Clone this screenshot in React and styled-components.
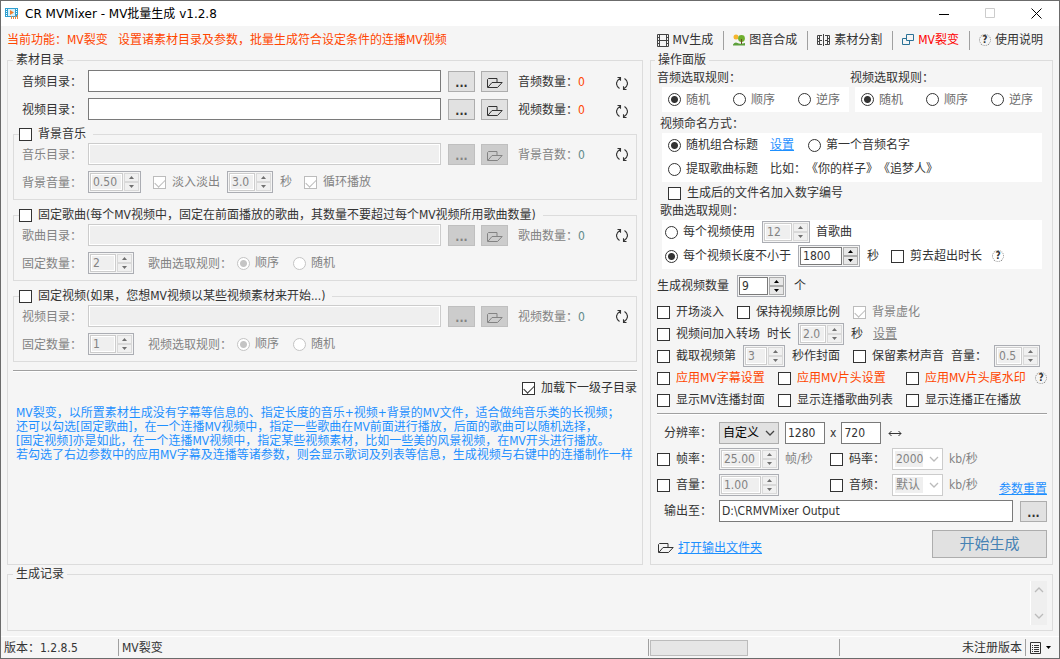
import { useId, useState } from 'react'
import styled, { createGlobalStyle, css } from 'styled-components'

const help = [
  'MV裂变，以所置素材生成没有字幕等信息的、指定长度的音乐+视频+背景的MV文件，适合做纯音乐类的长视频；',
  '还可以勾选[固定歌曲]，在一个连播MV视频中，指定一些歌曲在MV前面进行播放，后面的歌曲可以随机选择，',
  '[固定视频]亦是如此，在一个连播MV视频中，指定某些视频素材，比如一些美的风景视频，在MV开头进行播放。',
  '若勾选了右边参数中的应用MV字幕及连播等诸参数，则会显示歌词及列表等信息，生成视频与右键中的连播制作一样',
]

/* ---------- icons ---------- */

const AppIcon = () => (
  <svg width="14" height="13" viewBox="0 0 14 13">
    <rect x="0" y="1" width="13" height="9" fill="#2f9fd0" />
    <rect x="3" y="2" width="7" height="7" fill="#d9f1fa" />
    <path d="M1 2h1v1H1zM1 4h1v1H1zM1 6h1v1H1zM1 8h1v1H1zM11 2h1v1h-1zM11 4h1v1h-1zM11 6h1v1h-1z" fill="#fff" />
    <path d="M5 3l4 2.5L5 8z" fill="#f08030" />
    <path d="M6.5 12V9M8.5 12V9.5M10.5 12V9M12.5 12V8" stroke="#e58a4a" />
  </svg>
)

const FilmIcon = () => (
  <svg width="12" height="13" viewBox="0 0 12 13" fill="none" stroke="#444">
    <path d="M.5.5h11v12H.5zM2.5.5v12M9.5.5v12M2.5 6.5h7M.5 3.5h2M.5 6.5h2M.5 9.5h2M9.5 3.5h2M9.5 6.5h2M9.5 9.5h2" />
  </svg>
)

const TreeIcon = () => (
  <svg width="12" height="12" viewBox="0 0 12 12">
    <circle cx="3" cy="3" r="2.5" fill="#f5b52e" />
    <path d="M0 10.5Q2 7.5 4.5 9T12 9v2.5H0z" fill="#5da03c" />
    <circle cx="8.5" cy="4.5" r="3.4" fill="#6faf2d" />
    <path d="M8.5 5v5" stroke="#6b4a23" />
  </svg>
)

const SplitIcon = () => (
  <svg width="13" height="12" viewBox="0 0 13 12" fill="none" stroke="#444">
    <path d="M5 1.5H.5v9H5M2.5 1.5v9M.5 4.5h2M.5 7.5h2M2.5 6.5H5M8 1.5h4.5v9H8M10.5 1.5v9M10.5 4.5h2M10.5 7.5h2M8 6.5h2.5" />
    <path d="M6.5 0v12" />
  </svg>
)

const CloneIcon = () => (
  <svg width="12" height="12" viewBox="0 0 12 12" fill="none" stroke="#2b7296">
    <path d="M4.500.5h7v6h-7zM4.500 4.500h-4v6h7v-4" />
  </svg>
)

const FolderIcon = () => (
  <svg width="16" height="10" viewBox="0 0 16 10" fill="none" stroke="currentColor">
    <path d="M.5 9.500v-8l1-1h8.500v4M.8 9.500l4.200-5h10.200l-4.700 5z" />
  </svg>
)

const RefreshIcon = () => (
  <svg width="12" height="13" viewBox="0 0 12 13" fill="none" stroke="#333" strokeWidth="1.1">
    <path d="M3.500 11.500Q.5 9.500.5 6.500T4.200 1.200M1.500.5h3v3.200M8.500 1.500q3 2 3 5T7.800 11.800M10.500 12.500h-3V9.300" />
  </svg>
)

const SwapIcon = () => (
  <svg width="14" height="7" viewBox="0 0 14 7" fill="none" stroke="#333">
    <path d="M1 3.500h12M3.500 1L1 3.500 3.500 6M10.500 1L13 3.500 10.500 6" />
  </svg>
)

const Chevron = ({ up }) => (
  <svg width="10" height="6" viewBox="0 0 10 6" fill="none" stroke="currentColor" strokeWidth="1.3">
    <path d={up ? 'M1 5l4-4 4 4' : 'M1 1l4 4 4-4'} />
  </svg>
)

const Triangle = ({ up }) => (
  <svg width="5" height="3" viewBox="0 0 5 3" fill="currentColor">
    <path d={up ? 'M0 3h5L2.500 0z' : 'M0 0h5L2.500 3z'} />
  </svg>
)

const ListIcon = () => (
  <svg width="12" height="12" viewBox="0 0 12 12" fill="none" stroke="#333">
    <path d="M.5.5h10v11H.5zM2 3.500h1M4 3.500h5M2 5.500h1M4 5.500h5M2 7.500h1M4 7.500h5M2 9.500h1M4 9.500h5" />
  </svg>
)

/* ---------- controls ---------- */

const Check = ({ children, tone, ...rest }) => (
  <Choice $tone={rest.disabled ? 'muted' : tone}>
    <Tick type="checkbox" {...rest} />
    {children}
  </Choice>
)

const Radio = ({ children, tone, ...rest }) => (
  <Choice $gap={5} $tone={rest.disabled ? 'muted' : tone}>
    <Dot type="radio" {...rest} />
    {children}
  </Choice>
)

const Spinner = ({ value, step = 1, digits = 0, width = 46, label, disabled, id }) => {
  const [val, setVal] = useState(value)
  const move = (by) => setVal((prev) => (Number(prev) + by).toFixed(digits))

  return (
    <SpinBox $width={width}>
      <input id={id} aria-label={label} value={val} disabled={disabled} onChange={(e) => setVal(e.target.value)} />
      <span>
        <button type="button" aria-label="+" disabled={disabled} onClick={() => move(step)}><Triangle up /></button>
        <button type="button" aria-label="-" disabled={disabled} onClick={() => move(-step)}><Triangle /></button>
      </span>
    </SpinBox>
  )
}

const Select = ({ options, width, label, disabled }) => (
  <SelectBox $width={width} $off={disabled}>
    <select aria-label={label} disabled={disabled}>
      {options.map((o) => <option key={o}>{o}</option>)}
    </select>
    <Chevron />
  </SelectBox>
)

const FolderRow = ({ name, count, disabled }) => {
  const id = useId()
  return (
    <Row>
      <Caption as="label" htmlFor={id} $muted={disabled}>{name}：</Caption>
      <TextBox id={id} disabled={disabled} />
      <PickButtons>
        <SmallButton type="button" disabled={disabled}>...</SmallButton>
        <SmallButton type="button" aria-label="open" disabled={disabled}><FolderIcon /></SmallButton>
      </PickButtons>
      <Count $muted={disabled}>{count}：<b>0</b></Count>
      <IconButton type="button" aria-label="refresh" $low={!disabled}><RefreshIcon /></IconButton>
    </Row>
  )
}

const OrderRadios = ({ name }) => (
  <WhiteBox $columns>
    <Radio name={name} tone="soft" defaultChecked>随机</Radio>
    <Radio name={name} tone="soft">顺序</Radio>
    <Radio name={name} tone="soft">逆序</Radio>
  </WhiteBox>
)

/* ---------- panels ---------- */

const SourcePanel = () => (
  <Group>
    <legend>素材目录</legend>
    <TopRows>
      <FolderRow name="音频目录" count="音频数量" />
      <FolderRow name="视频目录" count="视频数量" />
    </TopRows>

    <SubGroup>
      <legend><Check>背景音乐</Check></legend>
      <FolderRow name="音乐目录" count="背景音数" disabled />
      <Row>
        <Caption $muted>背景音量：</Caption>
        <Spinner value="0.50" step={0.05} digits={2} width={53} label="背景音量" disabled />
        <Spaced $left={12}><Check disabled defaultChecked>淡入淡出</Check></Spaced>
        <Spaced $left={7}><Spinner value="3.0" step={0.1} digits={1} label="淡入淡出秒数" disabled /></Spaced>
        <Spaced $left={7} $muted>秒</Spaced>
        <Spaced $left={12}><Check disabled defaultChecked>循环播放</Check></Spaced>
      </Row>
    </SubGroup>

    <SubGroup>
      <legend><Check>固定歌曲(每个MV视频中，固定在前面播放的歌曲，其数量不要超过每个MV视频所用歌曲数量)</Check></legend>
      <FolderRow name="歌曲目录" count="歌曲数量" disabled />
      <Row>
        <Caption $muted>固定数量：</Caption>
        <Spinner value="2" label="固定歌曲数量" disabled />
        <RuleCaption>歌曲选取规则：</RuleCaption>
        <Radio name="songFix" disabled defaultChecked>顺序</Radio>
        <Spaced $left={14}><Radio name="songFix" disabled>随机</Radio></Spaced>
      </Row>
    </SubGroup>

    <SubGroup>
      <legend><Check>固定视频(如果，您想MV视频以某些视频素材来开始...)</Check></legend>
      <FolderRow name="视频目录" count="视频数量" disabled />
      <Row>
        <Caption $muted>固定数量：</Caption>
        <Spinner value="1" label="固定视频数量" disabled />
        <RuleCaption>视频选取规则：</RuleCaption>
        <Radio name="videoFix" disabled defaultChecked>顺序</Radio>
        <Spaced $left={14}><Radio name="videoFix" disabled>随机</Radio></Spaced>
      </Row>
    </SubGroup>

    <Divider />
    <SubFolders><Check defaultChecked>加载下一级子目录</Check></SubFolders>
    <Help>
      {help.map((line) => <p key={line}>{line}</p>)}
    </Help>
  </Group>
)

const OptionPanel = () => (
  <Group $side>
    <legend>操作面版</legend>

    <Columns>
      <div>
        <Title $out>音频选取规则：</Title>
        <OrderRadios name="audioRule" />
      </div>
      <div>
        <Title $out>视频选取规则：</Title>
        <OrderRadios name="videoRule" />
      </div>
    </Columns>

    <Title>视频命名方式：</Title>
    <WhiteBox>
      <BoxRow>
        <Radio name="naming" defaultChecked>随机组合标题</Radio>
        <Spaced $left={12}><Link href="#naming">设置</Link></Spaced>
        <Spaced $left={14}><Radio name="naming">第一个音频名字</Radio></Spaced>
      </BoxRow>
      <BoxRow>
        <Radio name="naming">提取歌曲标题</Radio>
        <Spaced $left={12}>比如：《你的样子》《追梦人》</Spaced>
      </BoxRow>
    </WhiteBox>
    <Numbering><Check>生成后的文件名加入数字编号</Check></Numbering>

    <Title>歌曲选取规则：</Title>
    <WhiteBox $tight>
      <BoxRow>
        <Radio name="length">每个视频使用</Radio>
        <Spaced $left={7}><Spinner value="12" width={48} label="歌曲数" disabled /></Spaced>
        <Spaced $left={6}>首歌曲</Spaced>
      </BoxRow>
      <BoxRow>
        <Radio name="length" defaultChecked>每个视频长度不小于</Radio>
        <Spaced $left={7}><Spinner value="1800" width={62} label="视频长度" /></Spaced>
        <Spaced $left={7}>秒</Spaced>
        <Spaced $left={12}><Check>剪去超出时长</Check></Spaced>
        <Spaced $left={10}><HelpMark>?</HelpMark></Spaced>
      </BoxRow>
    </WhiteBox>

    <CountRow>
      <label htmlFor="videoCount">生成视频数量</label>
      <Spinner id="videoCount" value="9" width={49} />
      个
    </CountRow>

    <Options>
      <OptionGrid $columns="80px 116px 1fr">
        <Check>开场淡入</Check>
        <Check>保持视频原比例</Check>
        <Check disabled defaultChecked>背景虚化</Check>
      </OptionGrid>
      <OptionRow>
        <Check>视频间加入转场</Check>
        时长
        <Spinner value="2.0" step={0.1} digits={1} label="转场时长" disabled />
        秒
        <Spaced $left={3}><Link href="#transition" $muted>设置</Link></Spaced>
      </OptionRow>
      <OptionRow>
        <Check>截取视频第</Check>
        <Spinner value="3" width={42} label="封面秒数" disabled />
        秒作封面
        <Spaced $left={6}><Check>保留素材声音</Check></Spaced>
        音量：
        <Spinner value="0.5" step={0.1} digits={1} label="素材音量" disabled />
      </OptionRow>
      <OptionGrid $columns="121px 128px 1fr auto">
        <Check tone="hot">应用MV字幕设置</Check>
        <Check tone="hot">应用MV片头设置</Check>
        <Check tone="hot">应用MV片头尾水印</Check>
        <HelpMark>?</HelpMark>
      </OptionGrid>
      <OptionGrid $columns="121px 128px 1fr">
        <Check>显示MV连播封面</Check>
        <Check>显示连播歌曲列表</Check>
        <Check>显示连播正在播放</Check>
      </OptionGrid>
    </Options>

    <Divider />

    <Output>
      <Row>
        <OutCaption $plain>分辨率：</OutCaption>
        <Select options={['自定义', '1280x720', '1920x1080']} width={60} label="分辨率" />
        <Spaced $left={6}><TextBox $width={40} aria-label="宽" defaultValue="1280" /></Spaced>
        <Spaced $left={5}>x</Spaced>
        <Spaced $left={5}><TextBox $width={40} aria-label="高" defaultValue="720" /></Spaced>
        <Spaced $left={7}><SwapIcon /></Spaced>
      </Row>
      <Row>
        <OutCaption><Check>帧率：</Check></OutCaption>
        <Spinner value="25.00" digits={2} width={60} label="帧率" disabled />
        <Unit $muted>帧/秒</Unit>
        <RateCaption><Check>码率：</Check></RateCaption>
        <Select options={['2000']} width={51} label="码率" disabled />
        <Unit $muted>kb/秒</Unit>
      </Row>
      <Row>
        <OutCaption><Check>音量：</Check></OutCaption>
        <Spinner value="1.00" digits={2} width={60} label="音量" disabled />
        <Unit />
        <RateCaption><Check>音频：</Check></RateCaption>
        <Select options={['默认']} width={51} label="音频" disabled />
        <Unit $muted>kb/秒</Unit>
        <Reset href="#reset">参数重置</Reset>
      </Row>
      <Row>
        <OutCaption as="label" htmlFor="output" $plain>输出至：</OutCaption>
        <TextBox id="output" defaultValue="D:\CRMVMixer Output" />
        <PickButtons><SmallButton type="button">...</SmallButton></PickButtons>
      </Row>
    </Output>

    <Actions>
      <OpenFolder>
        <FolderIcon />
        <Link href="#output">打开输出文件夹</Link>
      </OpenFolder>
      <StartButton type="button">开始生成</StartButton>
    </Actions>
  </Group>
)

const App = () => (
  <>
    <GlobalStyle />
    <Window>
      <TitleBar>
        <AppIcon />
        <h1>CR MVMixer - MV批量生成 v1.2.8</h1>
        <button type="button" aria-label="minimize">
          <svg width="11" height="11" stroke="#000"><path d="M0 6.500h10" /></svg>
        </button>
        <button type="button" aria-label="maximize" disabled>
          <svg width="11" height="11" fill="none" stroke="#ccc"><path d="M.5.5h9v9h-9z" /></svg>
        </button>
        <button type="button" aria-label="close">
          <svg width="11" height="11" stroke="#000"><path d="M.5.5l10 10M10.500.5l-10 10" /></svg>
        </button>
      </TitleBar>

      <Header>
        <p>当前功能：MV裂变&nbsp;&nbsp; 设置诸素材目录及参数，批量生成符合设定条件的连播MV视频</p>
        <ToolBar>
          <ToolButton type="button"><FilmIcon />MV生成</ToolButton>
          <ToolButton type="button"><TreeIcon />图音合成</ToolButton>
          <ToolButton type="button"><SplitIcon />素材分割</ToolButton>
          <ToolButton type="button" $active><CloneIcon />MV裂变</ToolButton>
          <ToolButton type="button"><HelpMark>?</HelpMark>使用说明</ToolButton>
        </ToolBar>
      </Header>

      <Main>
        <SourcePanel />
        <OptionPanel />
      </Main>

      <Log>
        <legend>生成记录</legend>
        <ScrollBar>
          <Chevron up />
          <Chevron />
        </ScrollBar>
      </Log>

      <StatusBar>
        <StatusCell>版本：1.2.8.5</StatusCell>
        <StatusCell $line>MV裂变</StatusCell>
        <StatusCell $line><Progress /></StatusCell>
        <StatusCell $line $right>未注册版本</StatusCell>
        <MenuButton type="button" aria-label="menu"><ListIcon /><Triangle /></MenuButton>
      </StatusBar>
    </Window>
  </>
)

export default App

const GlobalStyle = createGlobalStyle`
  * {
    box-sizing: border-box;
  }
  body {
    margin: 0;
    background: #f5f5f5;
    color: #333;
    font: 12px/14px "DejaVu Sans Condensed", "Noto Sans CJK SC", sans-serif;
    white-space: nowrap;
    text-spacing-trim: space-all;
  }
  button, input, select {
    margin: 0;
    padding: 0;
    font: inherit;
    color: inherit;
  }
  p, h1 {
    margin: 0;
  }
  svg {
    display: block;
    flex: none;
  }
`

const Window = styled.div`
  min-height: 100vh;
  display: flex;
  flex-direction: column;
  border: 1px solid #6b6b6b;
`

const TitleBar = styled.header`
  height: 25px;
  padding-left: 4px;
  display: flex;
  align-items: center;
  background: #fff;
  color: #000;

  h1 {
    flex: 1;
    margin-left: 6px;
    font: 12px/18px "DejaVu Sans", "Noto Sans CJK SC", sans-serif;
  }
  button {
    width: 46px;
    height: 24px;
    display: flex;
    align-items: center;
    justify-content: center;
    border: none;
    background: none;
  }
`

const Header = styled.div`
  height: 27px;
  padding: 1px 6px 0;
  display: flex;
  align-items: center;
  justify-content: space-between;

  p {
    color: #ff4500;
  }
`

const ToolBar = styled.nav`
  display: flex;
`

const ToolButton = styled.button`
  height: 19px;
  padding: 0 10px 0 9px;
  display: flex;
  align-items: center;
  gap: 4px;
  border: none;
  background: none;
  color: ${(p) => (p.$active ? '#f00' : '#333')};

  & + & {
    border-left: 1px solid #a0a0a0;
  }
`

const Main = styled.main`
  padding: 0 6px;
  display: grid;
  grid-template-columns: minmax(0, 1fr) 403px;
  gap: 7px;
`

const Group = styled.fieldset`
  min-width: 0;
  margin: 0;
  padding: 0 5px 6px ${(p) => (p.$side ? 6 : 5)}px;
  border: 1px solid #dcdcdc;

  > legend {
    margin-left: ${(p) => (p.$side ? -2 : 0)}px;
    padding: 0 3px;
  }
`

const SubGroup = styled.fieldset`
  min-width: 0;
  margin: 0 0 8px;
  padding: 2px 8px 6px;
  border: 1px solid #dcdcdc;

  > legend {
    margin-left: -3px;
    padding: 0 7px 0 0;
  }
  > div + div {
    margin-top: 6px;
  }
`

const Row = styled.div`
  height: 22px;
  display: flex;
  align-items: center;
`

const TopRows = styled.div`
  padding: 3px 9px 0;
  margin-bottom: 7px;
  display: grid;
  gap: 6px;
`

const muted = css`
  color: ${(p) => (p.$muted ? '#838383' : 'inherit')};
`

const Caption = styled.span`
  flex: none;
  width: 66px;
  padding-top: 2px;
  ${muted}
`

const RuleCaption = styled.span`
  width: 89px;
  margin-left: 14px;
  padding-top: 2px;
  color: #838383;
`

const Spaced = styled.span`
  display: flex;
  align-items: center;
  margin-left: ${(p) => p.$left}px;
  ${muted}
`

const TextBox = styled.input`
  flex: ${(p) => (p.$width ? 'none' : 1)};
  width: ${(p) => (p.$width ? `${p.$width}px` : 'auto')};
  min-width: 0;
  height: 22px;
  padding: 0 2px;
  border: 1px solid #7a7a7a;
  background: #fff;

  &:disabled {
    border-color: #ccc;
    background: #efefef;
    box-shadow: inset 0 0 0 1px #fff;
  }
`

const PickButtons = styled.span`
  display: flex;
  gap: 6px;
  margin-left: 7px;
`

const SmallButton = styled.button`
  width: 27px;
  height: 21px;
  padding-top: 3px;
  display: flex;
  align-items: center;
  justify-content: center;
  border: 1px solid #adadad;
  background: #e1e1e1;
  font-weight: 700;

  &:disabled {
    border-color: #bfbfbf;
    background: #ccc;
    color: #838383;
  }
`

const Count = styled.span`
  width: 98px;
  margin-left: 10px;
  padding-top: 1px;
  ${muted}

  b {
    color: ${(p) => (p.$muted ? '#5f8a8a' : '#ff4500')};
    font-weight: 400;
  }
`

const IconButton = styled.button`
  padding: ${(p) => (p.$low ? 5 : 0)}px 0 0;
  border: none;
  background: none;
`

const tones = { muted: '#838383', soft: '#6d6d6d', hot: '#ff4500' }

const Choice = styled.label`
  display: flex;
  align-items: center;
  gap: ${(p) => p.$gap || 6}px;
  color: ${(p) => tones[p.$tone] || '#333'};
`

const Tick = styled.input`
  appearance: none;
  flex: none;
  width: 13px;
  height: 13px;
  border: 1px solid #333;
  background: #fff;

  &:checked::after {
    content: '';
    display: block;
    width: 9px;
    height: 5px;
    margin: 2px 0 0 1px;
    border: solid #333;
    border-width: 0 0 1px 1px;
    transform: rotate(-45deg);
  }
  &:disabled, &:disabled::after {
    border-color: #bcbcbc;
  }
`

const Dot = styled.input`
  appearance: none;
  flex: none;
  width: 13px;
  height: 13px;
  border: 1px solid #333;
  border-radius: 50%;
  background: #fff;

  &:checked {
    background: radial-gradient(circle, #333 3px, #fff 4px);
  }
  &:disabled {
    border-color: #c4c4c4;
  }
  &:checked:disabled {
    background: radial-gradient(circle, #c4c4c4 3px, #fff 4px);
  }
`

const SpinBox = styled.span`
  flex: none;
  width: ${(p) => p.$width}px;
  height: 22px;
  padding: 1px;
  display: flex;
  gap: 1px;
  border: 1px solid #abadb3;
  background: #f5f5f5;

  input {
    flex: 1;
    min-width: 0;
    padding: 0 2px;
    border: 1px solid #7a7a7a;
    background: #fff;
  }
  input:disabled {
    border-color: #ccc;
    background: #efefef;
    color: #838383;
    box-shadow: inset 0 0 0 1px #fff;
  }
  span {
    width: 15px;
    display: grid;
    grid-template-rows: 1fr 1fr;
  }
  button {
    display: flex;
    align-items: center;
    justify-content: center;
    border: 1px solid #acacac;
    background: #e8e8e8;
    color: #000;
  }
  button:disabled {
    border-color: #d9d9d9;
    background: #f0f0f0;
    color: #707070;
  }
`

const SelectBox = styled.span`
  position: relative;
  width: ${(p) => p.$width}px;
  height: 22px;
  color: ${(p) => (p.$off ? '#838383' : '#000')};

  select {
    appearance: none;
    width: 100%;
    height: 100%;
    padding: 0 3px;
    border: 1px solid ${(p) => (p.$off ? '#ccc' : '#adadad')};
    border-radius: 0;
    background: ${(p) => (p.$off ? 'linear-gradient(#efefef, #efefef) 2px 2px / 28px 16px no-repeat #fff' : '#e1e1e1')};
    opacity: 1;
  }
  svg {
    position: absolute;
    right: 4px;
    top: 8px;
    color: ${(p) => (p.$off ? '#bbb' : '#444')};
    pointer-events: none;
  }
`

const Divider = styled.hr`
  margin: 0;
  border: none;
  border-top: 1px solid #a0a0a0;
  border-bottom: 1px solid #fff;
`

const SubFolders = styled.div`
  display: flex;
  justify-content: flex-end;
  padding-top: 9px;
`

const Help = styled.div`
  padding: 11px 3px 0;
  color: #1e90ff;
`

const Columns = styled.div`
  margin: 4px 5px 5px;
  display: grid;
  grid-template-columns: 1fr 1fr;
  gap: 6px;
`

const Title = styled.div`
  margin: 0 0 2px ${(p) => (p.$out ? -5 : 3)}px;
`

const WhiteBox = styled.div`
  background: #fff;

  ${(p) => p.$columns
    ? css`
        height: 25px;
        padding-left: 6px;
        display: grid;
        grid-template-columns: 65px 65px 1fr;
      `
    : css`
        margin: 0 5px;
        padding: 0 0 1px ${p.$tight ? 3 : 6}px;
      `}
`

const BoxRow = styled.div`
  height: 24px;
  display: flex;
  align-items: center;
`

const Numbering = styled.div`
  height: 22px;
  padding-left: 11px;
  display: flex;
  align-items: center;
`

const CountRow = styled.div`
  margin: 6px 0 4px;
  display: flex;
  align-items: center;
  gap: 8px;
`

const Options = styled.div`
  margin-bottom: 2px;
  display: grid;
  grid-auto-rows: 22px;
`

const OptionGrid = styled.div`
  display: grid;
  grid-template-columns: ${(p) => p.$columns};
  align-items: center;
`

const OptionRow = styled.div`
  display: flex;
  align-items: center;
  gap: 7px;
`

const Output = styled.div`
  padding-top: 7px;
  display: grid;
  gap: 4px;
`

const OutCaption = styled.span`
  flex: none;
  width: 62px;
  padding-left: ${(p) => (p.$plain ? 7 : 0)}px;
`

const RateCaption = styled.span`
  width: 62px;
`

const Unit = styled.span`
  width: 51px;
  padding-left: 6px;
  ${muted}
`

const Link = styled.a`
  color: ${(p) => (p.$muted ? '#838383' : '#1e90ff')};
`

const Reset = styled(Link)`
  align-self: flex-end;
  margin-left: auto;
`

const HelpMark = styled.span`
  flex: none;
  width: 12px;
  height: 12px;
  border: 1px dotted #888;
  border-radius: 50%;
  color: #333;
  font-size: 10px;
  font-weight: 700;
  line-height: 10px;
  text-align: center;
`

const Actions = styled.div`
  margin-top: 8px;
  display: flex;
  justify-content: space-between;
`

const OpenFolder = styled.span`
  padding: 8px 0 0 1px;
  display: flex;
  align-items: center;
  gap: 4px;
`

const StartButton = styled.button`
  width: 115px;
  height: 28px;
  border: 1px solid #adadad;
  background: #e1e1e1;
  color: #4682b4;
  font-size: 15px;
`

const Log = styled.fieldset`
  flex: 1;
  min-width: 0;
  margin: 2px 6px 5px;
  padding: 0 5px 4px;
  border: 1px solid #dcdcdc;

  > legend {
    padding: 0 3px;
  }
`

const ScrollBar = styled.div`
  width: 17px;
  height: 44px;
  margin-left: auto;
  padding: 6px 0;
  display: flex;
  flex-direction: column;
  align-items: center;
  justify-content: space-between;
  border-left: 1px solid #fff;
  background: #efefef;
  color: #bbb;
`

const StatusBar = styled.footer`
  height: 22px;
  padding: 2px 0;
  display: grid;
  grid-template-columns: 117fr 530fr 191fr 186fr 34px;
  border-top: 1px solid #fff;
`

const StatusCell = styled.div`
  padding: 0 3px;
  display: flex;
  align-items: center;
  justify-content: ${(p) => (p.$right ? 'flex-end' : 'flex-start')};
  border-left: ${(p) => (p.$line ? '1px solid #a0a0a0' : 'none')};
`

const Progress = styled.div`
  width: 98px;
  height: 16px;
  margin-left: -2px;
  border: 1px solid #bcbcbc;
  background: #e6e6e6;
`

const MenuButton = styled.button`
  display: flex;
  align-items: center;
  gap: 4px;
  padding-left: 4px;
  border: none;
  border-left: 1px solid #a0a0a0;
  background: none;
  color: #000;
`
